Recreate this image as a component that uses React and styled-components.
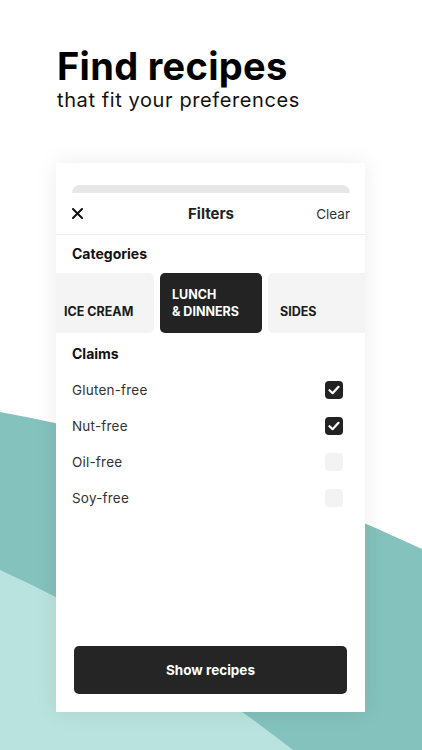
import React from 'react'
import styled, { createGlobalStyle } from 'styled-components'

const GlobalStyle = createGlobalStyle`
  html, body {
    margin: 0;
    padding: 0;
    background: #fff;
  }
  body {
    font-family: Inter, "Noto Sans", sans-serif;
    color: #111;
  }
`

const Screen = styled.div`
  position: relative;
  width: 422px;
  height: 750px;
  overflow: hidden;
  background: #fff;
`

const Waves = styled.svg`
  position: absolute;
  left: 0;
  top: 0;
  z-index: 0;
`

const Content = styled.div`
  position: relative;
  z-index: 1;
  padding: 44px 0 0 57px;
`

const Title = styled.h1`
  margin: 0;
  font-size: 38px;
  line-height: 44px;
  font-weight: 700;
  letter-spacing: 0.3px;
  color: #000;
`

const Subtitle = styled.p`
  margin: 0;
  font-size: 20px;
  line-height: 24px;
  font-weight: 400;
  letter-spacing: 0.6px;
  color: #111;
`

const Card = styled.div`
  margin: 51px 0 0 -1px;
  width: 309px;
  height: 549px;
  background: #fff;
  box-shadow: 0 0 22px rgba(0, 0, 0, 0.08);
  display: flex;
  flex-direction: column;
  overflow: hidden;
  box-sizing: border-box;
  padding-top: 22px;
`

const Tab = styled.div`
  margin: 0 15px 0 16px;
  height: 8px;
  background: #e7e7e7;
  border-radius: 8px 8px 0 0;
`

const Header = styled.div`
  display: grid;
  grid-template-columns: 1fr auto 1fr;
  align-items: center;
  height: 41px;
  padding: 0 15px 0 16px;
  border-bottom: 1px solid #eeeeee;
`

const Close = styled.svg`
  display: block;
`

const HeaderTitle = styled.div`
  font-size: 15px;
  font-weight: 700;
  color: #222;
`

const ClearBtn = styled.div`
  justify-self: end;
  font-size: 13.5px;
  color: #333;
`

const SectionLabel = styled.div`
  padding: ${p => p.$top}px 16px 0;
  font-size: 14px;
  line-height: 18px;
  font-weight: 700;
  color: #111;
`

const Chips = styled.div`
  display: flex;
  gap: 6px;
  margin: 10px 0 0 -4px;
`

const Chip = styled.div`
  flex: 0 0 102px;
  height: 60px;
  box-sizing: border-box;
  padding: 0 10px 13px 12px;
  border-radius: 5px;
  display: flex;
  align-items: flex-end;
  background: ${p => (p.$active ? '#232323' : '#f4f4f4')};
  color: ${p => (p.$active ? '#fff' : '#1a1a1a')};
  font-size: 12.5px;
  line-height: 17px;
  font-weight: 700;
  text-transform: uppercase;
  white-space: pre-line;
`

const Claims = styled.div`
  margin-top: 9px;
`

const ClaimRow = styled.div`
  height: 36px;
  display: flex;
  align-items: center;
  justify-content: space-between;
  padding: 0 22px 0 16px;
  font-size: 13.5px;
  letter-spacing: 0.2px;
  color: #333;
`

const Box = styled.div`
  width: 18px;
  height: 18px;
  border-radius: 4px;
  background: ${p => (p.$checked ? '#222' : '#f3f3f3')};
  display: flex;
  align-items: center;
  justify-content: center;
`

const Spacer = styled.div`
  flex: 1;
`

const ShowButton = styled.button`
  margin: 0 18px 18px;
  height: 48px;
  border: none;
  border-radius: 5px;
  background: #252525;
  color: #fff;
  font-family: Inter, "Noto Sans", sans-serif;
  font-size: 13.5px;
  font-weight: 700;
`

const categories = [
  { label: 'Ice cream' },
  { label: 'Lunch\n& dinners', active: true },
  { label: 'Sides' },
]

const claims = [
  { label: 'Gluten-free', checked: true },
  { label: 'Nut-free', checked: true },
  { label: 'Oil-free' },
  { label: 'Soy-free' },
]

const Check = () => (
  <svg width="12" height="10" viewBox="0 0 12 10">
    <path d="M1.5 5.2 L4.6 8.2 L10.5 1.8" fill="none" stroke="#fff" strokeWidth="2.2" strokeLinecap="round" strokeLinejoin="round" />
  </svg>
)

const App = () => {
  return (
    <Screen>
      <GlobalStyle />
      <Waves width="422" height="750" viewBox="0 0 422 750">
        <path d="M0 412 Q211 450 422 549 L422 750 L0 750 Z" fill="#84c2bd" />
        <path d="M0 570 Q146 636 293 750 L0 750 Z" fill="#b9e3de" />
      </Waves>
      <Content>
        <Title>Find recipes</Title>
        <Subtitle>that fit your preferences</Subtitle>
        <Card>
          <Tab />
          <Header>
            <Close width="11" height="11" viewBox="0 0 11 11">
              <path d="M1 1 L10 10 M10 1 L1 10" stroke="#111" strokeWidth="2" strokeLinecap="round" />
            </Close>
            <HeaderTitle>Filters</HeaderTitle>
            <ClearBtn>Clear</ClearBtn>
          </Header>
          <SectionLabel $top={10}>Categories</SectionLabel>
          <Chips>
            {categories.map(c => (
              <Chip key={c.label} $active={c.active}>{c.label}</Chip>
            ))}
          </Chips>
          <SectionLabel $top={12}>Claims</SectionLabel>
          <Claims>
            {claims.map(c => (
              <ClaimRow key={c.label}>
                {c.label}
                <Box $checked={c.checked}>{c.checked && <Check />}</Box>
              </ClaimRow>
            ))}
          </Claims>
          <Spacer />
          <ShowButton>Show recipes</ShowButton>
        </Card>
      </Content>
    </Screen>
  )
}

export default App
